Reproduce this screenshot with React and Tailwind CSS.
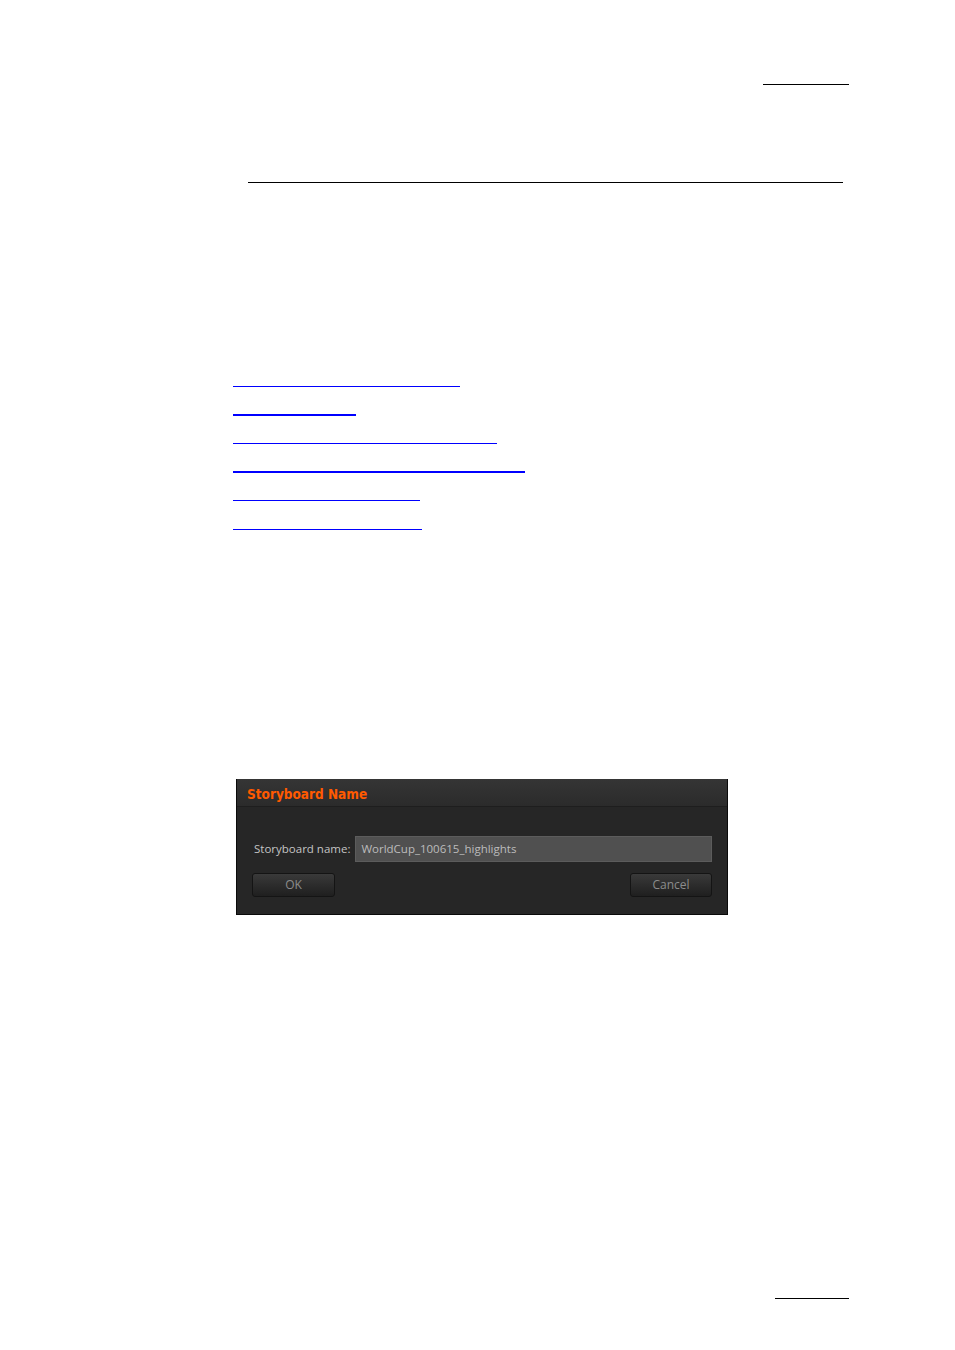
const links = [
  { w: 'w-[227px]', h: 'h-px', mt: 'mt-[203px]' },
  { w: 'w-[123px]', h: 'h-[2px]', mt: 'mt-[27px]' },
  { w: 'w-[264px]', h: 'h-px', mt: 'mt-[27px]' },
  { w: 'w-[292px]', h: 'h-[2px]', mt: 'mt-[27px]' },
  { w: 'w-[187px]', h: 'h-px', mt: 'mt-[27px]' },
  { w: 'w-[189px]', h: 'h-px', mt: 'mt-[28px]' },
];

const StoryboardDialog = () => (
  <div className="ml-[236px] mt-[249px] w-[492px] h-[136px] flex flex-col bg-[#262626] border border-t-0 border-[#0a0a0a] font-['Open_Sans',sans-serif]">
    {/* Title bar */}
    <div className="h-[28px] flex items-center pl-[10px] pt-[3px] bg-gradient-to-b from-[#353535] to-[#2b2b2b] border-b border-[#1e1e1e]">
      <span className="text-[13.5px] font-bold text-[#ff5a00] font-['DejaVu_Sans_Condensed','DejaVu_Sans',sans-serif]">
        Storyboard Name
      </span>
    </div>

    {/* Body */}
    <div className="flex-1 px-[15px] pt-[29px]">
      <div className="flex items-center gap-[5px] pl-[2px]">
        <span className="text-[11.5px] text-[#c4c4c4] whitespace-nowrap">Storyboard name:</span>
        <div className="flex-1 h-[26px] bg-[#505050] border border-[#5c5c5c] flex items-center px-[5px]">
          <span className="text-[11.5px] text-[#bcbcbc]">WorldCup_100615_highlights</span>
        </div>
      </div>
      <div className="flex justify-between mt-[11px]">
        <button className="w-[83px] h-[24px] rounded-[3px] bg-gradient-to-b from-[#3a3a3a] to-[#1f1f1f] border border-[#141414] text-[12px] text-[#8c8c8c]">
          OK
        </button>
        <button className="w-[82px] h-[24px] rounded-[3px] bg-gradient-to-b from-[#3a3a3a] to-[#1f1f1f] border border-[#141414] text-[12px] text-[#8c8c8c]">
          Cancel
        </button>
      </div>
    </div>
  </div>
);

export default function App() {
  return (
    <div className="w-[955px] h-[1350px] bg-white flex flex-col overflow-hidden">
      {/* header rule */}
      <div className="ml-[763px] mt-[84px] w-[86px] h-px bg-black" />
      <div className="ml-[248px] mt-[97px] w-[595px] h-px bg-black" />

      {/* link underlines */}
      {links.map((l, i) => (
        <div key={i} className={`ml-[233px] ${l.mt} ${l.w} ${l.h} bg-[#0000ff]`} />
      ))}

      <StoryboardDialog />

      {/* footer rule */}
      <div className="ml-[775px] mt-[383px] w-[74px] h-px bg-black" />
    </div>
  );
}
